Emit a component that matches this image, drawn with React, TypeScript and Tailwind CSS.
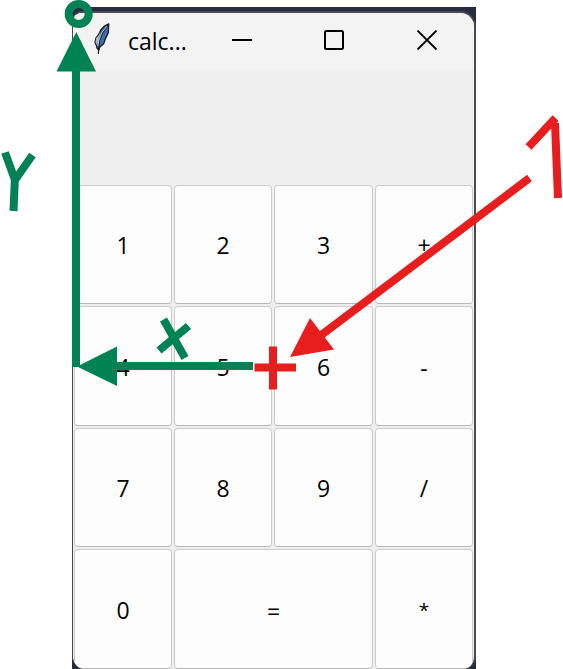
import React from 'react';

type KeyProps = { label: string; wide?: boolean; glyph?: string };

function Key({ label, wide, glyph = 'text-[23px] pt-[2px]' }: KeyProps) {
  return (
    <button
      className={`${wide ? 'col-span-2' : ''} flex items-center justify-center rounded-[4px] border border-[#cccccc] border-b-[#b8b8b8] bg-[#fdfdfd] leading-none text-black`}
    >
      <span className={glyph}>{label}</span>
    </button>
  );
}

function Feather() {
  return (
    <svg className="h-[32px] w-[18px]" viewBox="0 0 18 32" fill="none">
      <path d="M15.7.8 11.5 3 7.8 7 5.4 12 3 15 2 19l1.2 3 .8 3 1.6 2.2 1.4-3.4 3.5-2.8 1.8-5 3-6.2Z" fill="#3d6eaa" stroke="#151922" strokeWidth="1.3" strokeLinejoin="round" />
      <path d="M7.5 8 6 12l-2.8 3-.8 4 1.6 3 2-6Z" fill="#a9b5c4" />
      <path d="M15 2 9.5 10 6.5 18 5.3 31" stroke="#151922" strokeWidth="1.2" />
      <path d="M14 3 9 9.5 6 17 4.8 23" stroke="#d5e0ef" strokeWidth=".8" />
    </svg>
  );
}

function Annotations() {
  return (
    <svg className="pointer-events-none absolute left-0 top-0 h-[669px] w-[563px]" viewBox="0 0 563 669" fill="none">
      <g stroke="#008255" strokeWidth="8">
        <circle cx="78.7" cy="14" r="10" />
        <path d="M76 70V367M97 366H253" />
        <path d="M5 152.5 15 180 32.5 155M15 176 13.5 211" />
        <path d="M163.5 319.5 185 358M159 350.5 188.5 326" />
      </g>
      <g fill="#008255">
        <path d="M76.3 32 96 71.5H56.5Z" />
        <path d="M77 366.5 117 346.5V386Z" />
      </g>
      <g stroke="#e81d1d" strokeWidth="8">
        <path d="M254.5 367.5H296M273 346.5V389.5M529.5 178 320 336" />
        <path d="M528.5 147 555.5 118M555 123 558 198" />
      </g>
      <path d="M290 357 310 318 334 349.5Z" fill="#e81d1d" />
    </svg>
  );
}

export default function App() {
  return (
    <div className="relative h-[669px] w-[563px] overflow-hidden bg-white pl-[72px] pt-[7px] font-['Open_Sans','Noto_Sans',sans-serif]">
      <div className="h-[662px] w-[404px] bg-[#292c40] pt-1">
        <div className="h-[658px] overflow-hidden rounded-b-[13px] rounded-tl-[10px] rounded-tr-[16px] border-l border-r-2 border-t-2 border-l-[#48484b] border-r-[#4b4b50] border-t-[#494a57] bg-[#efefef]">
          <header className="flex h-14 items-center bg-[#f3f3f3]">
            <div className="ml-5 mt-[-4px]"><Feather /></div>
            <h1 className="ml-[17px] w-[76px] text-[23px] leading-none text-black">calc...</h1>
            <svg className="ml-[28px] h-[22px] w-[206px]" viewBox="0 0 206 22" fill="none" stroke="#000">
              <path d="M0 10H20" strokeWidth="2" />
              <rect x="93" y="1" width="18" height="18" rx="1.5" strokeWidth="2" />
              <path d="m185.5.5 19 19m0-19-19 19" strokeWidth="1.8" />
            </svg>
          </header>
          <div className="h-[116px]" />
          <main className="ml-px grid w-[399px] grid-cols-[98px_98px_99px_98px] grid-rows-[119px_120px_119px_120px] gap-[2px]">
            <Key label="1" /><Key label="2" /><Key label="3" /><Key label="+" />
            <Key label="4" /><Key label="5" /><Key label="6" /><Key label="-" glyph="text-[23px] pt-[4px]" />
            <Key label="7" /><Key label="8" /><Key label="9" /><Key label="/" />
            <Key label="0" /><Key label="=" wide glyph="text-[23px] pt-[5px]" /><Key label="*" glyph="text-[19px] pt-[2px]" />
          </main>
        </div>
      </div>
      <Annotations />
    </div>
  );
}
